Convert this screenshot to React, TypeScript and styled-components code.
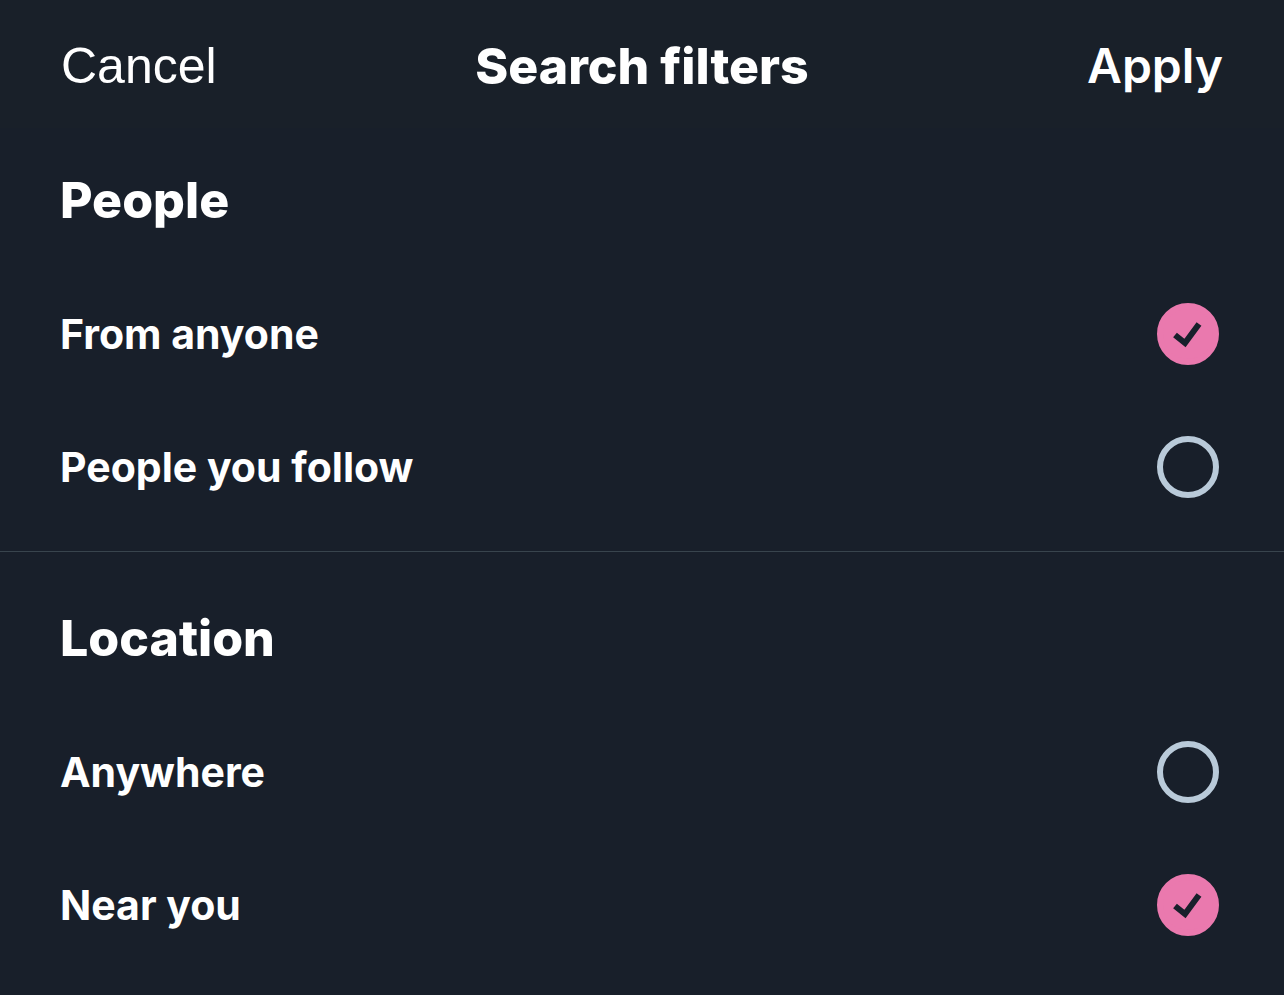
import React, { useState } from "react";
import styled, { createGlobalStyle } from "styled-components";

const GlobalStyle = createGlobalStyle`
  * { box-sizing: border-box; }
  body {
    margin: 0;
    background: #181f2a;
    color: #fff;
    font-family: Inter, "Liberation Sans", sans-serif;
  }
`;

const Header = styled.header`
  display: grid;
  grid-template-columns: 1fr auto 1fr;
  align-items: center;
  padding: 33px 61px 29px;
  background: #192029;
`;

const Main = styled.main`
  padding-top: 6px;
`;

const Title = styled.h1`
  margin: 0;
  font-size: 50px;
  line-height: 66px;
  font-weight: 800;
`;

const HeaderButton = styled.button<{ $primary?: boolean }>`
  justify-self: ${(p) => (p.$primary ? "end" : "start")};
  padding: 0;
  border: 0;
  background: none;
  color: inherit;
  font-family: ${(p) => (p.$primary ? "inherit" : '"Liberation Sans", sans-serif')};
  font-size: ${(p) => (p.$primary ? 48 : 50)}px;
  line-height: 66px;
  font-weight: ${(p) => (p.$primary ? 600 : 400)};
  cursor: pointer;
`;

const Group = styled.fieldset`
  min-width: 0;
  margin: 0;
  padding: 0 0 18px;
  border: 0;

  & + & {
    border-top: 1px solid #38444d;
    padding-top: 20px;
  }
`;

const GroupTitle = styled.legend`
  float: left;
  width: 100%;
  padding: 0 60px;
  font-size: 50px;
  line-height: 133px;
  font-weight: 800;
`;

const Option = styled.label`
  clear: both;
  display: flex;
  align-items: center;
  justify-content: space-between;
  height: 133px;
  padding: 0 65px 0 60px;
  font-size: 41px;
  line-height: 52px;
  font-weight: 700;
  cursor: pointer;
`;

const Control = styled.span`
  display: grid;
  width: 62px;
  height: 62px;

  & > * {
    grid-area: 1 / 1;
  }
`;

const Radio = styled.input`
  appearance: none;
  width: 62px;
  height: 62px;
  margin: 0;
  border: 6px solid #b9cad9;
  border-radius: 50%;
  cursor: pointer;

  &:checked {
    border-color: #ea79ae;
    background: #ea79ae;
  }
`;

const Check = styled.svg`
  width: 62px;
  height: 62px;
  pointer-events: none;
`;

const groups = [
  { name: "People", options: ["From anyone", "People you follow"], initial: 0 },
  { name: "Location", options: ["Anywhere", "Near you"], initial: 1 },
];

function FilterGroup({ name, options, initial }: (typeof groups)[number]) {
  const [selected, setSelected] = useState(initial);
  return (
    <Group>
      <GroupTitle>{name}</GroupTitle>
      {options.map((label, i) => (
        <Option key={label}>
          {label}
          <Control>
            <Radio type="radio" name={name} checked={selected === i} onChange={() => setSelected(i)} />
            {selected === i && (
              <Check viewBox="0 0 62 62" aria-hidden="true">
                <path d="M18 32 L28 40 L42 21" fill="none" stroke="#18202b" strokeWidth="6" />
              </Check>
            )}
          </Control>
        </Option>
      ))}
    </Group>
  );
}

export default function App() {
  return (
    <>
      <GlobalStyle />
      <Header>
        <HeaderButton type="button">Cancel</HeaderButton>
        <Title>Search filters</Title>
        <HeaderButton type="button" $primary>Apply</HeaderButton>
      </Header>
      <Main>
        {groups.map((g) => (
          <FilterGroup key={g.name} {...g} />
        ))}
      </Main>
    </>
  );
}
